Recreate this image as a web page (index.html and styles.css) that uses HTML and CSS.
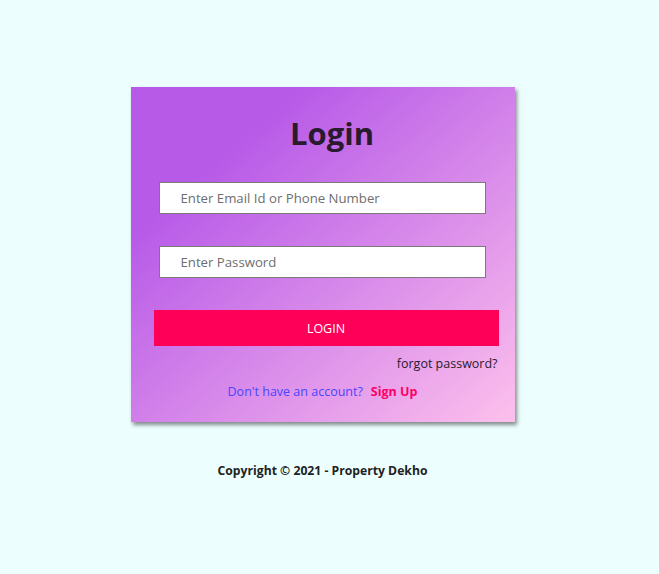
FILE: index.html
```html
<!DOCTYPE html>
<html>
<head>
<meta charset="utf-8">
<link rel="stylesheet" href="styles.css">
</head>
<body>
<div class="page">
  <div class="card">
    <h1 class="title">Login</h1>
    <input class="field field-email" type="text" placeholder="Enter Email Id or Phone Number">
    <input class="field field-pass" type="password" placeholder="Enter Password">
    <button class="btn">LOGIN</button>
    <div class="forgot">forgot password?</div>
    <div class="signup"><span class="ask">Don't have an account?</span><span class="link">Sign Up</span></div>
  </div>
  <div class="copyright">Copyright © 2021 - Property Dekho</div>
</div>
</body>
</html>
```
FILE: styles.css
```css
html, body {
  margin: 0;
  padding: 0;
  background: #ecfffe;
  font-family: "Open Sans", "Noto Sans", sans-serif;
}
.page {
  width: 645px;
  padding-top: 87px;
  display: flex;
  flex-direction: column;
  align-items: center;
}
.card {
  width: 384px;
  height: 335px;
  box-sizing: border-box;
  background: linear-gradient(to bottom right, #b75ae8 22%, #fdc0ec 100%);
  box-shadow: 2px 3px 4px rgba(0,0,0,0.45);
  display: flex;
  flex-direction: column;
  align-items: flex-start;
  padding-top: 27px;
}
.title {
  align-self: center;
  margin: 0 0 0 19px;
  font-size: 31px;
  line-height: 38px;
  font-weight: 700;
  color: #2a1a30;
}
.field {
  box-sizing: border-box;
  width: 327px;
  height: 32px;
  margin-left: 28px;
  border: 1px solid #7a7a7a;
  background: #fff;
  padding: 0 0 0 21px;
  font-family: inherit;
  font-size: 13.2px;
  color: #333;
  outline: none;
}
.field::placeholder {
  color: #6e6e6e;
}
.field-email { margin-top: 30px; }
.field-pass { margin-top: 32px; }
.btn {
  margin-top: 32px;
  margin-left: 23px;
  width: 345px;
  height: 36px;
  border: none;
  background: #ff0059;
  color: #fff;
  font-family: inherit;
  font-size: 12.5px;
  padding: 0;
}
.forgot {
  align-self: flex-end;
  margin-right: 17px;
  margin-top: 9px;
  font-size: 12.5px;
  line-height: 18px;
  color: #2a1a30;
}
.signup {
  align-self: center;
  margin-top: 10px;
  font-size: 12.5px;
  line-height: 18px;
  display: flex;
  gap: 8px;
}
.ask { color: #4646ff; }
.link { color: #ff0066; font-weight: 700; }
.copyright {
  margin-top: 40px;
  font-size: 12.2px;
  font-weight: 700;
  color: #222;
}
```
